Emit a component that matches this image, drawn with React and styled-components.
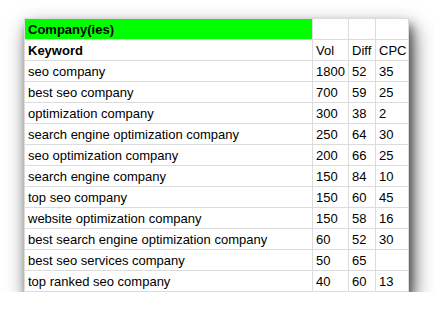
import React from "react";
import styled, { createGlobalStyle } from "styled-components";

const GlobalStyle = createGlobalStyle`
  html, body {
    margin: 0;
    padding: 0;
    background: #ffffff;
  }
  body {
    font-family: "Liberation Sans", Arial, Helvetica, sans-serif;
    font-size: 13px;
    color: #000;
  }
`;

const rows = [
  ["seo company", "1800", "52", "35"],
  ["best seo company", "700", "59", "25"],
  ["optimization company", "300", "38", "2"],
  ["search engine optimization company", "250", "64", "30"],
  ["seo optimization company", "200", "66", "25"],
  ["search engine company", "150", "84", "10"],
  ["top seo company", "150", "60", "45"],
  ["website optimization company", "150", "58", "16"],
  ["best search engine optimization company", "60", "52", "30"],
  ["best seo services company", "50", "65", ""],
  ["top ranked seo company", "40", "60", "13"],
];

export default function App() {
  return (
    <>
      <GlobalStyle />
      <Page>
        <Sheet>
          <Cell $green $bold>Company(ies)</Cell>
          <Cell />
          <Cell />
          <Cell />
          <Cell $bold>Keyword</Cell>
          <Cell>Vol</Cell>
          <Cell>Diff</Cell>
          <Cell>CPC</Cell>
          {rows.map((r) =>
            r.map((v, i) => <Cell key={r[0] + i}>{v}</Cell>)
          )}
        </Sheet>
      </Page>
    </>
  );
}

const Page = styled.div`
  padding: 18px 0 0 24px;
`;

const Sheet = styled.div`
  display: grid;
  grid-template-columns: 287px 35px 26px 32px;
  grid-auto-rows: 20px;
  gap: 1px;
  width: max-content;
  padding: 1px;
  background: #dcdcdc;
  box-shadow: 3px 7px 9px rgba(0, 0, 0, 0.45), 4px 10px 20px rgba(0, 0, 0, 0.6);
`;

const Cell = styled.div`
  display: flex;
  align-items: center;
  padding: 0 3px;
  background: ${(p) => (p.$green ? "#00ff00" : "#ffffff")};
  font-weight: ${(p) => (p.$bold ? "bold" : "normal")};
  white-space: nowrap;
  overflow: hidden;
`;
